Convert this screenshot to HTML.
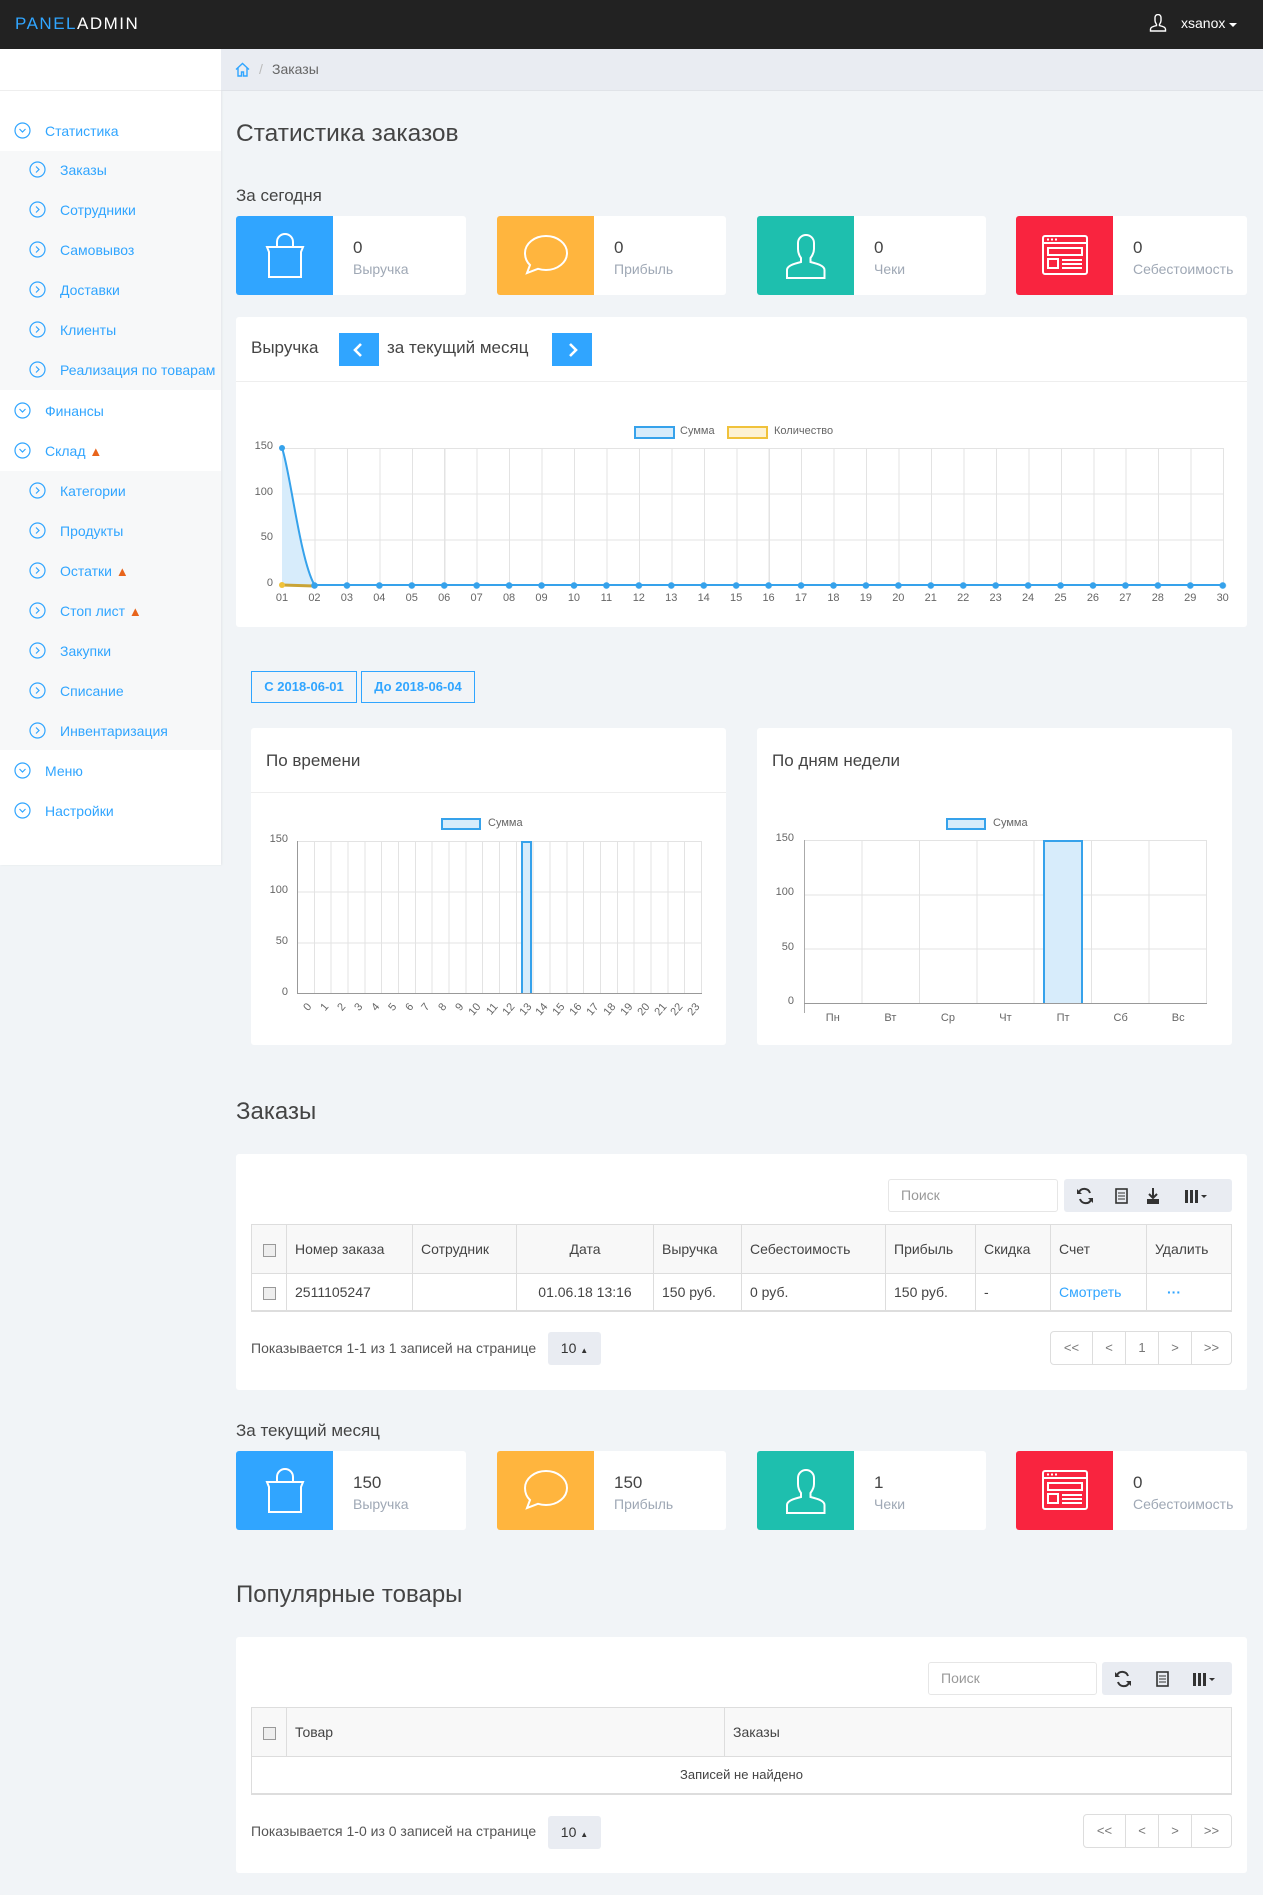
<!DOCTYPE html>
<html><head><meta charset="utf-8">
<style>
*{box-sizing:border-box;margin:0;padding:0}
body{width:1263px;height:1895px;background:#f1f4f7;font-family:"Liberation Sans",sans-serif;color:#444;position:relative;overflow:hidden}
.a{position:absolute}
.top{left:0;top:0;width:1263px;height:49px;background:#222}
.logo{left:15px;top:14px;font-size:17px;letter-spacing:1.5px;color:#fff}
.logo span{color:#30a5ff}
.side{left:0;top:49px;width:221px;height:816px;background:#fff;box-shadow:1px 0 2px rgba(0,0,0,.06)}
.sub{left:0;width:221px;background:#f7f8f9}
.mi{font-size:14px;color:#30a5ff;white-space:nowrap;line-height:18px}
.mi svg{position:absolute;top:0}
.crumb{left:221px;top:49px;width:1042px;height:42px;background:#e9ecf2;border-bottom:1px solid #e0e3e8}
.h1{font-size:24px;color:#444}
.h3{font-size:17px;color:#444}
.card{height:79px;background:#fff;border-radius:3px;overflow:hidden}
.card .ic{position:absolute;left:0;top:0;width:97px;height:79px}
.card .num{position:absolute;left:117px;top:22px;font-size:17px;color:#444}
.card .lb{position:absolute;left:117px;top:45px;font-size:14px;color:#9fa8b5}
.panel{background:#fff;border-radius:3px}
.btnb{background:#30a5ff;width:40px;height:33px}
.yl{font-size:11px;color:#666;text-align:right;width:30px}
.xl{font-size:11px;color:#666;text-align:center}
.datebtn{height:32px;border:1px solid #30a5ff;color:#30a5ff;font-size:13px;font-weight:bold;line-height:30px;text-align:center}
table{border-collapse:collapse;font-size:14px;color:#444}
td,th{border:1px solid #ddd;font-weight:normal;text-align:left;padding:0 8px}
th{background:#f8f8f8}
.cb{display:inline-block;width:13px;height:13px;border:1px solid #999;background:#eee;vertical-align:middle}
.search{background:#fff;border:1px solid #e6e6e6;border-radius:3px;font-size:14px;color:#999;padding-left:12px;line-height:35px}
.tool{background:#e9ecf2;border-radius:3px}
.pag{border:1px solid #ddd;border-radius:4px;display:flex;background:#fff}
.pag div{border-left:1px solid #ddd;text-align:center;line-height:32px;font-size:13px;color:#777}
.pag div:first-child{border-left:none}
.psz{background:#e9ecf2;border-radius:3px;font-size:14px;line-height:33px;text-align:center;color:#333}
.legbox{width:40px;height:12px;border:2px solid #36a2eb;background:#d7ecfb}
.rl{position:relative;height:12px}
.rl span{position:absolute;right:50%;top:0;transform:rotate(-50deg);transform-origin:100% 0;white-space:nowrap}
</style></head><body>

<div class="a top"></div>
<div class="a logo"><span>PANEL</span>ADMIN</div>
<svg class="a" style="left:1149px;top:14px" width="18" height="18" viewBox="0 0 18 18" fill="none" stroke="#fff" stroke-width="1.4"><path d="M6 3.5a3 3 0 0 1 6 0v3c0 2-1.2 3.3-1.5 3.8v1.3c3.5.8 6 1.8 6 3.4V17H1.5v-2c0-1.6 2.5-2.6 6-3.4v-1.3C7.2 9.8 6 8.5 6 6.5z"/></svg>
<div class="a" style="left:1181px;top:15px;color:#fff;font-size:14px">xsanox</div>
<div class="a" style="left:1229px;top:23px;width:0;height:0;border-left:4px solid transparent;border-right:4px solid transparent;border-top:4px solid #fff"></div>

<div class="a side"></div>
<div class="a" style="left:0;top:90px;width:221px;height:1px;background:#eee"></div>
<div class="a sub" style="top:151px;height:239px"></div>
<div class="a sub" style="top:471px;height:279px"></div>

<div class="a mi" style="left:14px;top:122px"><svg style="left:0" width="17" height="17" viewBox="0 0 17 17" fill="none" stroke="#30a5ff" stroke-width="1.2"><circle cx="8.5" cy="8.5" r="7.5"/><path d="M5.5 7l3 3 3-3"/></svg><span style="margin-left:31px">Статистика</span></div>
<div class="a mi" style="left:29px;top:161px"><svg style="left:0" width="17" height="17" viewBox="0 0 17 17" fill="none" stroke="#30a5ff" stroke-width="1.2"><circle cx="8.5" cy="8.5" r="7.5"/><path d="M7 5.5l3 3-3 3"/></svg><span style="margin-left:31px">Заказы</span></div>
<div class="a mi" style="left:29px;top:201px"><svg style="left:0" width="17" height="17" viewBox="0 0 17 17" fill="none" stroke="#30a5ff" stroke-width="1.2"><circle cx="8.5" cy="8.5" r="7.5"/><path d="M7 5.5l3 3-3 3"/></svg><span style="margin-left:31px">Сотрудники</span></div>
<div class="a mi" style="left:29px;top:241px"><svg style="left:0" width="17" height="17" viewBox="0 0 17 17" fill="none" stroke="#30a5ff" stroke-width="1.2"><circle cx="8.5" cy="8.5" r="7.5"/><path d="M7 5.5l3 3-3 3"/></svg><span style="margin-left:31px">Самовывоз</span></div>
<div class="a mi" style="left:29px;top:281px"><svg style="left:0" width="17" height="17" viewBox="0 0 17 17" fill="none" stroke="#30a5ff" stroke-width="1.2"><circle cx="8.5" cy="8.5" r="7.5"/><path d="M7 5.5l3 3-3 3"/></svg><span style="margin-left:31px">Доставки</span></div>
<div class="a mi" style="left:29px;top:321px"><svg style="left:0" width="17" height="17" viewBox="0 0 17 17" fill="none" stroke="#30a5ff" stroke-width="1.2"><circle cx="8.5" cy="8.5" r="7.5"/><path d="M7 5.5l3 3-3 3"/></svg><span style="margin-left:31px">Клиенты</span></div>
<div class="a mi" style="left:29px;top:361px"><svg style="left:0" width="17" height="17" viewBox="0 0 17 17" fill="none" stroke="#30a5ff" stroke-width="1.2"><circle cx="8.5" cy="8.5" r="7.5"/><path d="M7 5.5l3 3-3 3"/></svg><span style="margin-left:31px">Реализация по товарам</span></div>
<div class="a mi" style="left:14px;top:402px"><svg style="left:0" width="17" height="17" viewBox="0 0 17 17" fill="none" stroke="#30a5ff" stroke-width="1.2"><circle cx="8.5" cy="8.5" r="7.5"/><path d="M5.5 7l3 3 3-3"/></svg><span style="margin-left:31px">Финансы</span></div>
<div class="a mi" style="left:14px;top:442px"><svg style="left:0" width="17" height="17" viewBox="0 0 17 17" fill="none" stroke="#30a5ff" stroke-width="1.2"><circle cx="8.5" cy="8.5" r="7.5"/><path d="M5.5 7l3 3 3-3"/></svg><span style="margin-left:31px">Склад <span style="color:#e8641b;font-size:13px">&#9650;</span></span></div>
<div class="a mi" style="left:29px;top:482px"><svg style="left:0" width="17" height="17" viewBox="0 0 17 17" fill="none" stroke="#30a5ff" stroke-width="1.2"><circle cx="8.5" cy="8.5" r="7.5"/><path d="M7 5.5l3 3-3 3"/></svg><span style="margin-left:31px">Категории</span></div>
<div class="a mi" style="left:29px;top:522px"><svg style="left:0" width="17" height="17" viewBox="0 0 17 17" fill="none" stroke="#30a5ff" stroke-width="1.2"><circle cx="8.5" cy="8.5" r="7.5"/><path d="M7 5.5l3 3-3 3"/></svg><span style="margin-left:31px">Продукты</span></div>
<div class="a mi" style="left:29px;top:562px"><svg style="left:0" width="17" height="17" viewBox="0 0 17 17" fill="none" stroke="#30a5ff" stroke-width="1.2"><circle cx="8.5" cy="8.5" r="7.5"/><path d="M7 5.5l3 3-3 3"/></svg><span style="margin-left:31px">Остатки <span style="color:#e8641b;font-size:13px">&#9650;</span></span></div>
<div class="a mi" style="left:29px;top:602px"><svg style="left:0" width="17" height="17" viewBox="0 0 17 17" fill="none" stroke="#30a5ff" stroke-width="1.2"><circle cx="8.5" cy="8.5" r="7.5"/><path d="M7 5.5l3 3-3 3"/></svg><span style="margin-left:31px">Стоп лист <span style="color:#e8641b;font-size:13px">&#9650;</span></span></div>
<div class="a mi" style="left:29px;top:642px"><svg style="left:0" width="17" height="17" viewBox="0 0 17 17" fill="none" stroke="#30a5ff" stroke-width="1.2"><circle cx="8.5" cy="8.5" r="7.5"/><path d="M7 5.5l3 3-3 3"/></svg><span style="margin-left:31px">Закупки</span></div>
<div class="a mi" style="left:29px;top:682px"><svg style="left:0" width="17" height="17" viewBox="0 0 17 17" fill="none" stroke="#30a5ff" stroke-width="1.2"><circle cx="8.5" cy="8.5" r="7.5"/><path d="M7 5.5l3 3-3 3"/></svg><span style="margin-left:31px">Списание</span></div>
<div class="a mi" style="left:29px;top:722px"><svg style="left:0" width="17" height="17" viewBox="0 0 17 17" fill="none" stroke="#30a5ff" stroke-width="1.2"><circle cx="8.5" cy="8.5" r="7.5"/><path d="M7 5.5l3 3-3 3"/></svg><span style="margin-left:31px">Инвентаризация</span></div>
<div class="a mi" style="left:14px;top:762px"><svg style="left:0" width="17" height="17" viewBox="0 0 17 17" fill="none" stroke="#30a5ff" stroke-width="1.2"><circle cx="8.5" cy="8.5" r="7.5"/><path d="M5.5 7l3 3 3-3"/></svg><span style="margin-left:31px">Меню</span></div>
<div class="a mi" style="left:14px;top:802px"><svg style="left:0" width="17" height="17" viewBox="0 0 17 17" fill="none" stroke="#30a5ff" stroke-width="1.2"><circle cx="8.5" cy="8.5" r="7.5"/><path d="M5.5 7l3 3 3-3"/></svg><span style="margin-left:31px">Настройки</span></div>

<div class="a crumb"></div>
<svg class="a" style="left:235px;top:62px" width="15" height="15" viewBox="0 0 15 15" fill="none" stroke="#30a5ff" stroke-width="1.4"><path d="M1 7.5L7.5 1.5 14 7.5M3 6v8h3.5v-4h2v4H12V6"/></svg>
<div class="a" style="left:259px;top:61px;font-size:14px;color:#bbb">/</div>
<div class="a" style="left:272px;top:61px;font-size:14px;color:#666">Заказы</div>

<div class="a h1" style="left:236px;top:120px;font-size:24.5px">Статистика заказов</div>
<div class="a h3" style="left:236px;top:186px">За сегодня</div>

<div class="a card" style="left:236px;top:216px;width:230px"><div class="ic" style="background:#30a5ff"><svg style="position:absolute;left:28px;top:16px" width="42" height="48" viewBox="0 0 42 48" fill="none" stroke="#fff" stroke-width="2"><path d="M13 15V10a8 8 0 0 1 16 0v5"/><path d="M3 15h36l-2 5v25H5V20z"/></svg></div><div class="num">0</div><div class="lb">Выручка</div></div>
<div class="a card" style="left:497px;top:216px;width:229px"><div class="ic" style="background:#ffb53e"><svg style="position:absolute;left:24px;top:17px" width="50" height="44" viewBox="0 0 50 44" fill="none" stroke="#fff" stroke-width="2"><path d="M25 3c11.6 0 21 7.6 21 17s-9.4 17-21 17c-3 0-5.5-.4-8-1.2L6 40l3-8C5.5 28.8 4 24.6 4 20 4 10.6 13.4 3 25 3z"/></svg></div><div class="num">0</div><div class="lb">Прибыль</div></div>
<div class="a card" style="left:757px;top:216px;width:229px"><div class="ic" style="background:#1ebfae"><svg style="position:absolute;left:26px;top:15px" width="46" height="50" viewBox="0 0 46 50" fill="none" stroke="#fff" stroke-width="2"><path d="M15 12a8 8 0 0 1 16 0v6c0 4-2 7-3.5 9v4c8 2 14 4 14 8v8H4v-8c0-4 6-6 14-8v-4c-1.5-2-3-5-3-9z"/></svg></div><div class="num">0</div><div class="lb">Чеки</div></div>
<div class="a card" style="left:1016px;top:216px;width:231px"><div class="ic" style="background:#f9243f"><svg style="position:absolute;left:25px;top:18px" width="48" height="42" viewBox="0 0 48 42" fill="none" stroke="#fff" stroke-width="2"><rect x="2" y="2" width="44" height="38" rx="2"/><path d="M2 9h44"/><path d="M6 5.5h2M10 5.5h2M14 5.5h2"/><rect x="7" y="14" width="34" height="7"/><rect x="7" y="25" width="10" height="9"/><path d="M21 26h20M21 30h20M21 34h20"/></svg></div><div class="num">0</div><div class="lb">Себестоимость</div></div>

<div class="a panel" style="left:236px;top:317px;width:1011px;height:310px"></div>
<div class="a" style="left:236px;top:381px;width:1011px;height:1px;background:#eee"></div>
<div class="a" style="left:251px;top:338px;font-size:17px">Выручка</div>
<div class="a btnb" style="left:339px;top:333px"><svg style="position:absolute;left:13px;top:9px" width="12" height="16" viewBox="0 0 12 16" fill="none" stroke="#fff" stroke-width="2.6"><path d="M9 2L3 8l6 6"/></svg></div>
<div class="a" style="left:387px;top:338px;font-size:17px">за текущий месяц</div>
<div class="a btnb" style="left:552px;top:333px"><svg style="position:absolute;left:15px;top:9px" width="12" height="16" viewBox="0 0 12 16" fill="none" stroke="#fff" stroke-width="2.6"><path d="M3 2l6 6-6 6"/></svg></div>

<div class="a legbox" style="left:634px;top:426px;width:41px;height:13px"></div>
<div class="a xl" style="left:680px;top:425px">Сумма</div>
<div class="a" style="left:727px;top:426px;width:41px;height:13px;border:2px solid #f0c23b;background:#fdf2d3"></div>
<div class="a xl" style="left:774px;top:425px">Количество</div>

<div class="a" style="left:282px;top:448px;width:942px;height:138px;background:repeating-linear-gradient(90deg,#e3e3e3 0 1px,transparent 1px 32.45px),repeating-linear-gradient(180deg,#e3e3e3 0 1px,transparent 1px 45.67px)"></div>
<div class="a" style="left:282px;top:448px;width:1px;height:138px;background:#aaa"></div>
<div class="a yl" style="left:243px;top:440px">150</div>
<div class="a yl" style="left:243px;top:486px">100</div>
<div class="a yl" style="left:243px;top:531px">50</div>
<div class="a yl" style="left:243px;top:577px">0</div>
<svg class="a" style="left:270px;top:440px" width="960" height="155" viewBox="270 440 960 155">
<path d="M282 448C290 470 300 560 314.5 585L282 585Z" fill="#d7ecfb"/>
<path d="M282 448C290 470 300 560 314.5 585L1223 585" fill="none" stroke="#36a2eb" stroke-width="2"/>
<path d="M282 585L314 586" stroke="#c9a437" stroke-width="3"/>
<circle cx="282" cy="448" r="3" fill="#36a2eb"/>
<circle cx="282" cy="585" r="3" fill="#f0c23b"/>
</svg>
<div class="a" style="left:310px;top:582px;width:918px;height:7px;background:radial-gradient(circle at 4.5px 3.5px,#36a2eb 3px,transparent 3.5px);background-size:32.45px 7px"></div>
<div class="a" style="left:267px;top:592px;width:971px;display:flex;justify-content:space-between;font-size:11px;color:#666">
<span style="width:30px;text-align:center">01</span><span style="width:30px;text-align:center">02</span><span style="width:30px;text-align:center">03</span><span style="width:30px;text-align:center">04</span><span style="width:30px;text-align:center">05</span><span style="width:30px;text-align:center">06</span><span style="width:30px;text-align:center">07</span><span style="width:30px;text-align:center">08</span><span style="width:30px;text-align:center">09</span><span style="width:30px;text-align:center">10</span><span style="width:30px;text-align:center">11</span><span style="width:30px;text-align:center">12</span><span style="width:30px;text-align:center">13</span><span style="width:30px;text-align:center">14</span><span style="width:30px;text-align:center">15</span><span style="width:30px;text-align:center">16</span><span style="width:30px;text-align:center">17</span><span style="width:30px;text-align:center">18</span><span style="width:30px;text-align:center">19</span><span style="width:30px;text-align:center">20</span><span style="width:30px;text-align:center">21</span><span style="width:30px;text-align:center">22</span><span style="width:30px;text-align:center">23</span><span style="width:30px;text-align:center">24</span><span style="width:30px;text-align:center">25</span><span style="width:30px;text-align:center">26</span><span style="width:30px;text-align:center">27</span><span style="width:30px;text-align:center">28</span><span style="width:30px;text-align:center">29</span><span style="width:30px;text-align:center">30</span></div>

<div class="a datebtn" style="left:251px;top:671px;width:106px">С 2018-06-01</div>
<div class="a datebtn" style="left:361px;top:671px;width:114px">До 2018-06-04</div>

<div class="a panel" style="left:251px;top:728px;width:475px;height:317px"></div>
<div class="a" style="left:251px;top:792px;width:475px;height:1px;background:#eee"></div>
<div class="a" style="left:266px;top:751px;font-size:17px">По времени</div>
<div class="a legbox" style="left:441px;top:818px"></div>
<div class="a xl" style="left:488px;top:817px">Сумма</div>
<div class="a" style="left:297px;top:841px;width:405px;height:153px;background:repeating-linear-gradient(90deg,#e3e3e3 0 1px,transparent 1px 16.83px),repeating-linear-gradient(180deg,#e3e3e3 0 1px,transparent 1px 50.67px)"></div>
<div class="a" style="left:297px;top:841px;width:1px;height:153px;background:#999"></div>
<div class="a" style="left:297px;top:993px;width:405px;height:1px;background:#999"></div>
<div class="a" style="left:521px;top:841px;width:11px;height:152px;border:2px solid #36a2eb;border-bottom:none;background:#d7ecfb"></div>
<div class="a yl" style="left:258px;top:833px">150</div>
<div class="a yl" style="left:258px;top:884px">100</div>
<div class="a yl" style="left:258px;top:935px">50</div>
<div class="a yl" style="left:258px;top:986px">0</div>
<div class="a" style="left:297px;top:1001px;width:405px;display:grid;grid-template-columns:repeat(24,1fr);font-size:11px;color:#666">
<div class="rl"><span>0</span></div><div class="rl"><span>1</span></div><div class="rl"><span>2</span></div><div class="rl"><span>3</span></div><div class="rl"><span>4</span></div><div class="rl"><span>5</span></div><div class="rl"><span>6</span></div><div class="rl"><span>7</span></div><div class="rl"><span>8</span></div><div class="rl"><span>9</span></div><div class="rl"><span>10</span></div><div class="rl"><span>11</span></div><div class="rl"><span>12</span></div><div class="rl"><span>13</span></div><div class="rl"><span>14</span></div><div class="rl"><span>15</span></div><div class="rl"><span>16</span></div><div class="rl"><span>17</span></div><div class="rl"><span>18</span></div><div class="rl"><span>19</span></div><div class="rl"><span>20</span></div><div class="rl"><span>21</span></div><div class="rl"><span>22</span></div><div class="rl"><span>23</span></div></div>

<div class="a panel" style="left:757px;top:728px;width:475px;height:317px"></div>
<div class="a" style="left:772px;top:751px;font-size:17px">По дням недели</div>
<div class="a legbox" style="left:946px;top:818px"></div>
<div class="a xl" style="left:993px;top:817px">Сумма</div>
<div class="a" style="left:804px;top:840px;width:403px;height:164px;background:repeating-linear-gradient(90deg,#e3e3e3 0 1px,transparent 1px 57.43px),repeating-linear-gradient(180deg,#e3e3e3 0 1px,transparent 1px 54.33px)"></div>
<div class="a" style="left:804px;top:840px;width:1px;height:173px;background:#aaa"></div>
<div class="a" style="left:804px;top:1003px;width:403px;height:1px;background:#999"></div>
<div class="a" style="left:1043px;top:840px;width:40px;height:163px;border:2px solid #36a2eb;border-bottom:none;background:#d7ecfb"></div>
<div class="a yl" style="left:764px;top:832px">150</div>
<div class="a yl" style="left:764px;top:886px">100</div>
<div class="a yl" style="left:764px;top:941px">50</div>
<div class="a yl" style="left:764px;top:995px">0</div>
<div class="a" style="left:804px;top:1012px;width:403px;display:grid;grid-template-columns:repeat(7,1fr);font-size:11px;color:#666;text-align:center">
<span>Пн</span><span>Вт</span><span>Ср</span><span>Чт</span><span>Пт</span><span>Сб</span><span>Вс</span></div>

<div class="a h1" style="left:236px;top:1098px">Заказы</div>
<div class="a panel" style="left:236px;top:1154px;width:1011px;height:236px"></div>
<div class="a search" style="left:888px;top:1179px;width:170px;height:33px;line-height:31px">Поиск</div>
<div class="a tool" style="left:1064px;top:1179px;width:168px;height:33px"></div>
<svg class="a" style="left:1074px;top:1185px" width="150" height="22" viewBox="0 0 150 22">
<g fill="none" stroke="#333" stroke-width="2"><path d="M16 8a6 6 0 0 0-11-1M6 14a6 6 0 0 0 11 1"/></g>
<path d="M3 4v5h5zM19 18v-5h-5z" fill="#333"/>
<rect x="42" y="4" width="11" height="14" fill="none" stroke="#333" stroke-width="1.6"/><path d="M44 8h7M44 11h7M44 14h7" stroke="#333"/>
<path d="M79 3v9M75 9l4 4 4-4" stroke="#333" stroke-width="2" fill="none"/><rect x="73" y="14" width="12" height="5" fill="#333"/>
<rect x="111" y="5" width="3" height="13" fill="#333"/><rect x="116" y="5" width="3" height="13" fill="#333"/><rect x="121" y="5" width="3" height="13" fill="#333"/><path d="M127 10h6l-3 3z" fill="#333"/>
</svg>
<table class="a" style="left:251px;top:1224px;width:981px">
<tr style="height:49px"><th style="width:35px;text-align:center"><span class="cb"></span></th><th style="width:126px">Номер заказа</th><th style="width:104px">Сотрудник</th><th style="width:137px;text-align:center">Дата</th><th style="width:88px">Выручка</th><th style="width:144px">Себестоимость</th><th style="width:90px">Прибыль</th><th style="width:75px">Скидка</th><th style="width:96px">Счет</th><th>Удалить</th></tr>
<tr style="height:37px;border-bottom:2px solid #ddd"><td style="text-align:center"><span class="cb"></span></td><td>2511105247</td><td></td><td style="text-align:center">01.06.18 13:16</td><td>150 руб.</td><td>0 руб.</td><td>150 руб.</td><td>-</td><td style="color:#30a5ff">Смотреть</td><td style="color:#30a5ff;font-weight:bold;padding-left:20px">···</td></tr>
</table>
<div class="a" style="left:251px;top:1340px;font-size:14px;color:#555">Показывается 1-1 из 1 записей на странице</div>
<div class="a psz" style="left:548px;top:1332px;width:53px;height:33px">10 <span style="font-size:8px">&#9650;</span></div>
<div class="a pag" style="left:1050px;top:1331px;height:34px;width:182px"><div style="width:41px">&lt;&lt;</div><div style="width:33px">&lt;</div><div style="width:33px">1</div><div style="width:33px">&gt;</div><div style="flex:1">&gt;&gt;</div></div>

<div class="a h3" style="left:236px;top:1421px">За текущий месяц</div>
<div class="a card" style="left:236px;top:1451px;width:230px"><div class="ic" style="background:#30a5ff"><svg style="position:absolute;left:28px;top:16px" width="42" height="48" viewBox="0 0 42 48" fill="none" stroke="#fff" stroke-width="2"><path d="M13 15V10a8 8 0 0 1 16 0v5"/><path d="M3 15h36l-2 5v25H5V20z"/></svg></div><div class="num">150</div><div class="lb">Выручка</div></div>
<div class="a card" style="left:497px;top:1451px;width:229px"><div class="ic" style="background:#ffb53e"><svg style="position:absolute;left:24px;top:17px" width="50" height="44" viewBox="0 0 50 44" fill="none" stroke="#fff" stroke-width="2"><path d="M25 3c11.6 0 21 7.6 21 17s-9.4 17-21 17c-3 0-5.5-.4-8-1.2L6 40l3-8C5.5 28.8 4 24.6 4 20 4 10.6 13.4 3 25 3z"/></svg></div><div class="num">150</div><div class="lb">Прибыль</div></div>
<div class="a card" style="left:757px;top:1451px;width:229px"><div class="ic" style="background:#1ebfae"><svg style="position:absolute;left:26px;top:15px" width="46" height="50" viewBox="0 0 46 50" fill="none" stroke="#fff" stroke-width="2"><path d="M15 12a8 8 0 0 1 16 0v6c0 4-2 7-3.5 9v4c8 2 14 4 14 8v8H4v-8c0-4 6-6 14-8v-4c-1.5-2-3-5-3-9z"/></svg></div><div class="num">1</div><div class="lb">Чеки</div></div>
<div class="a card" style="left:1016px;top:1451px;width:231px"><div class="ic" style="background:#f9243f"><svg style="position:absolute;left:25px;top:18px" width="48" height="42" viewBox="0 0 48 42" fill="none" stroke="#fff" stroke-width="2"><rect x="2" y="2" width="44" height="38" rx="2"/><path d="M2 9h44"/><path d="M6 5.5h2M10 5.5h2M14 5.5h2"/><rect x="7" y="14" width="34" height="7"/><rect x="7" y="25" width="10" height="9"/><path d="M21 26h20M21 30h20M21 34h20"/></svg></div><div class="num">0</div><div class="lb">Себестоимость</div></div>

<div class="a h1" style="left:236px;top:1581px">Популярные товары</div>
<div class="a panel" style="left:236px;top:1637px;width:1011px;height:236px"></div>
<div class="a search" style="left:928px;top:1662px;width:169px;height:33px;line-height:31px">Поиск</div>
<div class="a tool" style="left:1102px;top:1662px;width:130px;height:33px"></div>
<svg class="a" style="left:1112px;top:1668px" width="115" height="22" viewBox="0 0 115 22">
<g fill="none" stroke="#333" stroke-width="2"><path d="M16 8a6 6 0 0 0-11-1M6 14a6 6 0 0 0 11 1"/></g>
<path d="M3 4v5h5zM19 18v-5h-5z" fill="#333"/>
<rect x="45" y="4" width="11" height="14" fill="none" stroke="#333" stroke-width="1.6"/><path d="M47 8h7M47 11h7M47 14h7" stroke="#333"/>
<rect x="81" y="5" width="3" height="13" fill="#333"/><rect x="86" y="5" width="3" height="13" fill="#333"/><rect x="91" y="5" width="3" height="13" fill="#333"/><path d="M97 10h6l-3 3z" fill="#333"/>
</svg>
<table class="a" style="left:251px;top:1707px;width:981px">
<tr style="height:49px"><th style="width:35px;text-align:center"><span class="cb"></span></th><th style="width:438px">Товар</th><th>Заказы</th></tr>
<tr style="height:37px;border-bottom:2px solid #ddd"><td colspan="3" style="text-align:center;font-size:13px">Записей не найдено</td></tr>
</table>
<div class="a" style="left:251px;top:1823px;font-size:14px;color:#555">Показывается 1-0 из 0 записей на странице</div>
<div class="a psz" style="left:548px;top:1816px;width:53px;height:33px">10 <span style="font-size:8px">&#9650;</span></div>
<div class="a pag" style="left:1083px;top:1814px;height:34px;width:149px"><div style="width:41px">&lt;&lt;</div><div style="width:33px">&lt;</div><div style="width:33px">&gt;</div><div style="flex:1">&gt;&gt;</div></div>

</body></html>
